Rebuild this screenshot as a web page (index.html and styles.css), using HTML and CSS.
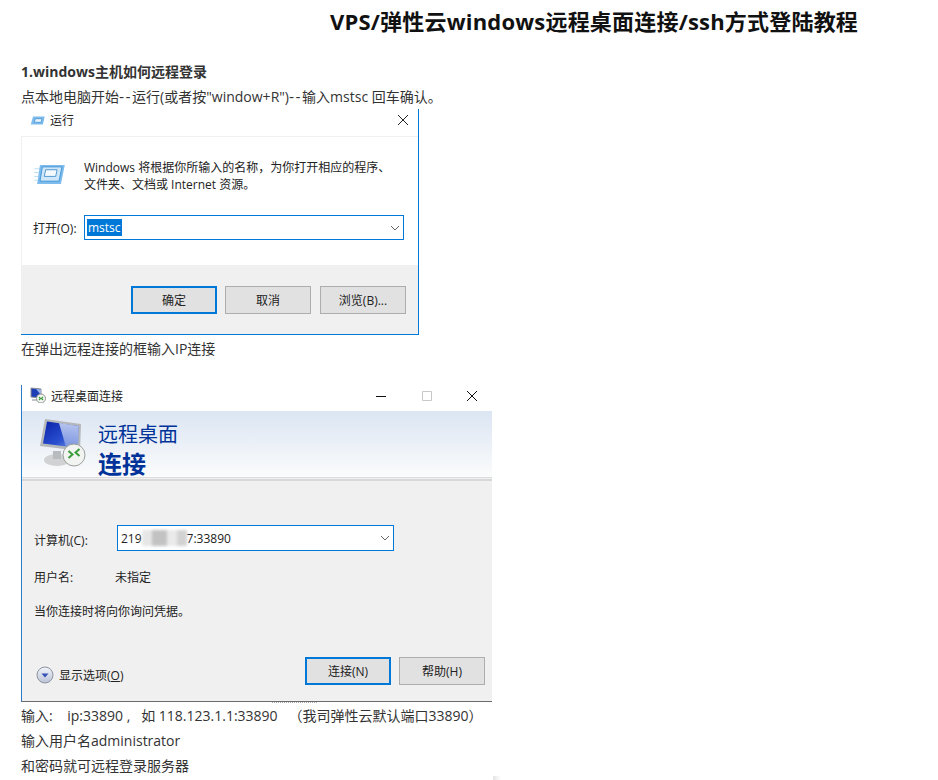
FILE: index.html
```html
<!DOCTYPE html>
<html lang="zh-CN">
<head>
<meta charset="utf-8">
<title>VPS/弹性云windows远程桌面连接/ssh方式登陆教程</title>
<link rel="stylesheet" href="styles.css">
</head>
<body>
<main class="article">
  <h1 class="title">VPS/弹性云windows远程桌面连接/ssh方式登陆教程</h1>
  <p class="line heading">1.windows主机如何远程登录</p>
  <p class="line">点本地电脑开始<span class="dash">--</span>运行(或者按"window+R")<span class="dash">--</span>输入mstsc 回车确认。</p>

  <section class="run">
    <div class="run-bar">
      <svg class="run-small" viewBox="0 0 16 10"><path d="M3 .5h13l-2 9H.500z" fill="#7dbcec"/><path d="M5.500 3h7.500l-1 4H4.500z" fill="#e8f3fb" stroke="#4f9bd8"/></svg>
      <span class="run-name">运行</span>
      <svg class="x-icon" viewBox="0 0 10 10"><path d="M0 0l10 10M10 0L0 10"/></svg>
    </div>
    <div class="run-body">
      <div class="run-intro">
        <svg class="run-large" viewBox="0 0 32 22"><path d="M0 5h6M0 9h5M0 13h4M0 17h3" stroke="#b9dbf3" stroke-width="1"/><path d="M6 1h26l-4 20H3z" fill="#7dbcec"/><path d="M8.500 3h20.500l-3 15H6z" fill="#cfe7f8" stroke="#3f95d8"/><path d="M12 6h12l-1.500 7H10.500z" fill="#f4f9fd" stroke="#4f96cf"/></svg>
        <p class="run-text">Windows 将根据你所输入的名称，为你打开相应的程序、<br>文件夹、文档或 Internet 资源。</p>
      </div>
      <div class="run-open">
        <span class="run-label">打开(O):</span>
        <div class="combo run-combo">
          <span class="selected">mstsc</span>
          <svg class="chevron" viewBox="0 0 10 6"><path d="M1 1l4 4 4-4"/></svg>
        </div>
      </div>
    </div>
    <div class="run-foot">
      <span class="btn btn-primary">确定</span>
      <span class="btn">取消</span>
      <span class="btn">浏览(B)...</span>
    </div>
  </section>

  <p class="line after-run">在弹出远程连接的框输入IP连接</p>

  <section class="rdp">
    <div class="rdp-bar">
      <svg class="rdp-small" viewBox="0 0 16 16"><path d="M1 1l10 1v9L1 10z" fill="#1d3fb5" stroke="#8a8f96"/><path d="M6 2l5 .5V8z" fill="#9db4e6"/><path d="M2 12h8v2H2z" fill="#c4c7ca"/><circle cx="11" cy="11.500" r="4.500" fill="#f4f6f4" stroke="#8f9491"/><path d="M9 10l1.500 1.500L9 13M13 10l-1.500 1.500L13 13" fill="none" stroke="#3a9c3a" stroke-width="1.200"/></svg>
      <span class="rdp-name">远程桌面连接</span>
      <span class="win-controls">
        <svg class="win-ctl" viewBox="0 0 10 10"><path d="M0 5.500h10"/></svg>
        <svg class="win-ctl win-max" viewBox="0 0 10 10"><path d="M.5.500h9v9h-9z"/></svg>
        <svg class="win-ctl" viewBox="0 0 10 10"><path d="M0 0l10 10M10 0L0 10"/></svg>
      </span>
    </div>
    <div class="rdp-head">
      <svg class="monitor" viewBox="0 0 48 48">
        <defs>
          <linearGradient id="scr" x1="0" y1="0" x2="1" y2="1"><stop offset="0" stop-color="#0a23a8"/><stop offset=".6" stop-color="#2a4fd0"/><stop offset="1" stop-color="#7f9be6"/></linearGradient>
          <linearGradient id="gl" x1="0" y1="0" x2="0" y2="1"><stop offset="0" stop-color="#dfe7f8"/><stop offset="1" stop-color="#7e97df"/></linearGradient>
        </defs>
        <ellipse cx="18" cy="41" rx="13" ry="6" fill="#d0d2d3"/>
        <path d="M14 32h8v8h-8z" fill="#b9bcbe"/>
        <path d="M6 0l36 5-1 27L1 27z" fill="#b5b8ba"/>
        <path d="M8 2.500l31.500 4.500L39 29 4 24.500z" fill="url(#scr)"/>
        <path d="M20 4l19.500 3L39 29l-12-1z" fill="url(#gl)" opacity=".8"/>
        <circle cx="35" cy="36" r="11" fill="#f2f4f2" stroke="#9a9f9c"/>
        <path d="M29.500 32l4 3.500-4 3.500M40.500 30l-4 3.500 4 3.500" fill="none" stroke="#3a9c3a" stroke-width="2"/>
      </svg>
      <div class="rdp-heading">
        <div class="rdp-sub">远程桌面</div>
        <div class="rdp-main">连接</div>
      </div>
    </div>
    <div class="rdp-rule"></div>
    <div class="rdp-body">
      <div class="rdp-row rdp-computer">
        <span class="rdp-label">计算机(C):</span>
        <div class="combo rdp-combo">
          <span>219</span>
          <span class="mosaic"><i class="m1"></i><i class="m2"></i><i class="m3"></i><i class="m4"></i></span>
          <span>7:33890</span>
          <svg class="chevron" viewBox="0 0 10 6"><path d="M1 1l4 4 4-4"/></svg>
        </div>
      </div>
      <div class="rdp-row rdp-user">
        <span class="rdp-label">用户名:</span>
        <span>未指定</span>
      </div>
      <p class="rdp-note">当你连接时将向你询问凭据。</p>
      <div class="rdp-foot">
        <div class="options">
          <svg class="opt-icon" viewBox="0 0 18 18"><defs><linearGradient id="op" x1="0" y1="0" x2="0" y2="1"><stop offset="0" stop-color="#f2f5fa"/><stop offset="1" stop-color="#b9c2d6"/></linearGradient></defs><circle cx="9" cy="9" r="8" fill="url(#op)" stroke="#8d93a0"/><path d="M5.500 7.500h7L9 11.500z" fill="#3552b8"/></svg>
          <span>显示选项(<u>O</u>)</span>
        </div>
        <span class="btn btn-primary">连接(N)</span>
        <span class="btn">帮助(H)</span>
      </div>
    </div>
    <div class="rdp-dots"></div>
  </section>

  <p class="line after-rdp">输入:    ip:33890 ,   如 118.123.1.1:33890   （我司弹性云默认端口33890）</p>
  <p class="line">输入用户名administrator</p>
  <p class="line">和密码就可远程登录服务器</p>
</main>
<div class="corner-mark"></div>
</body>
</html>
```
FILE: styles.css
```css
* { box-sizing: border-box; }
html, body { margin: 0; height: 780px; overflow: hidden; background: #fff; }
body { font-family: "Open Sans", "Noto Sans CJK SC", sans-serif; color: #333; font-size: 14px; position: relative; }

.article { padding: 0 0 0 21px; }
.title { margin: 0; padding: 6px 0 0 309px; height: 59px; font-size: 22px; line-height: 30px; font-weight: 700; color: #111; white-space: nowrap; letter-spacing: .2px; }
.line { margin: 0; height: 25px; line-height: 25px; white-space: pre-wrap; }
.heading { font-weight: 700; }
.dash { font-family: "DejaVu Sans", sans-serif; letter-spacing: 1.500px; }

.run { width: 398px; height: 226px; display: flex; flex-direction: column; border-right: 1px solid #0078d7; border-bottom: 1px solid #0078d7; font-size: 12px; color: #222; }
.run-bar { height: 27px; display: flex; align-items: center; padding: 0 10px 5px 9px; }
.run-small { width: 15px; height: 9px; margin-right: 5px; }
.run-name { flex: 1; }
.x-icon { width: 10px; height: 10px; fill: none; stroke: #222; stroke-width: 1; }
.run-body { height: 129px; border-top: 1px solid #f0f0f0; border-left: 1px solid #f0f0f0; padding: 22px 14px 0 11px; }
.run-intro { display: flex; gap: 19px; height: 56px; padding-left: 1px; }
.run-large { width: 31px; height: 21px; margin-top: 5px; flex: none; }
.run-text { margin: 0; line-height: 17px; white-space: nowrap; }
.run-open { display: flex; align-items: center; gap: 6px; }
.run-label { width: 45px; flex: none; white-space: nowrap; }
.combo { display: flex; align-items: center; background: #fff; border: 1px solid #0078d7; position: relative; flex: none; }
.run-combo { width: 320px; height: 25px; padding-left: 2px; }
.selected { background: #0078d7; color: #fff; height: 17px; line-height: 17px; padding: 0 1px; }
.chevron { position: absolute; right: 3px; top: 9px; width: 10px; height: 6px; fill: none; stroke: #666; stroke-width: 1; }
.run-foot { flex: 1; background: #f0f0f0; display: flex; gap: 8px; padding: 21px 0 0 110px; }
.run-foot .btn:last-child { margin-left: 1px; }

.btn { width: 86px; height: 28px; display: flex; align-items: center; justify-content: center; background: #e1e1e1; border: 1px solid #adadad; font-size: 12px; color: #222; }
.btn-primary { border: 2px solid #0078d7; }

.after-run { margin-top: 1px; }
.rdp { width: 471px; height: 317px; margin-top: 24px; border-left: 1px solid #2b7cc8; border-bottom: 1px solid #6b6b6b; display: flex; flex-direction: column; font-size: 12px; color: #222; position: relative; }
.rdp-bar { height: 26px; display: flex; align-items: center; padding: 0 15px 4px 8px; gap: 5px; }
.rdp-small { width: 16px; height: 16px; margin-bottom: 2px; }
.rdp-name { flex: 1; }
.win-controls { display: flex; gap: 35.500px; }
.win-ctl { width: 10px; height: 10px; fill: none; stroke: #111; stroke-width: 1; }
.win-max { stroke: #c8c8c8; }
.rdp-head { height: 66px; display: flex; padding: 8px 0 0 17px; gap: 11px; background: linear-gradient(#dbe5f3, #fbfcfc); }
.monitor { width: 48px; height: 48px; flex: none; }
.rdp-heading { color: #003399; margin-top: 3px; }
.rdp-sub { font-size: 20px; line-height: 26px; }
.rdp-main { font-size: 24px; line-height: 32px; font-weight: 700; }
.rdp-rule { height: 4px; background: #f0f0f0; border-top: 1px solid #dcdcdc; border-bottom: 2px solid #d8d8d8; }
.rdp-body { flex: 1; background: #f0f0f0; padding: 44px 0 0 12px; display: flex; flex-direction: column; }
.rdp-row { display: flex; align-items: center; }
.rdp-label { width: 83px; flex: none; }
.rdp-computer .rdp-label { padding-top: 3px; }
.rdp-user .rdp-label { width: 81px; }
.rdp-combo { width: 277px; height: 26px; padding-left: 3px; }
.mosaic { width: 45px; height: 16px; display: flex; filter: blur(1.500px); }
.mosaic i { display: block; height: 100%; }
.m1 { width: 10px; background: #e6e6e6; }
.m2 { width: 15px; background: #c2c2c2; }
.m3 { width: 10px; background: #eaeaea; }
.m4 { width: 10px; background: #d2d2d2; }
.rdp-user { margin-top: 14px; height: 24px; }
.rdp-note { margin: 14px 0 0; line-height: 18px; }
.rdp-foot { display: flex; gap: 8px; margin-top: 36px; height: 28px; }
.options { width: 263px; display: flex; align-items: center; gap: 5px; padding: 8px 0 0 2px; }
.opt-icon { width: 18px; height: 18px; flex: none; }
.rdp-dots { position: absolute; left: 250px; bottom: -2px; width: 45px; border-top: 1px dotted #aaa; }

.after-rdp { margin-top: 1px; }
.corner-mark { position: absolute; left: 493px; top: 776px; width: 8px; height: 4px; background: linear-gradient(90deg, #e4e4e4, #fff); }
```
